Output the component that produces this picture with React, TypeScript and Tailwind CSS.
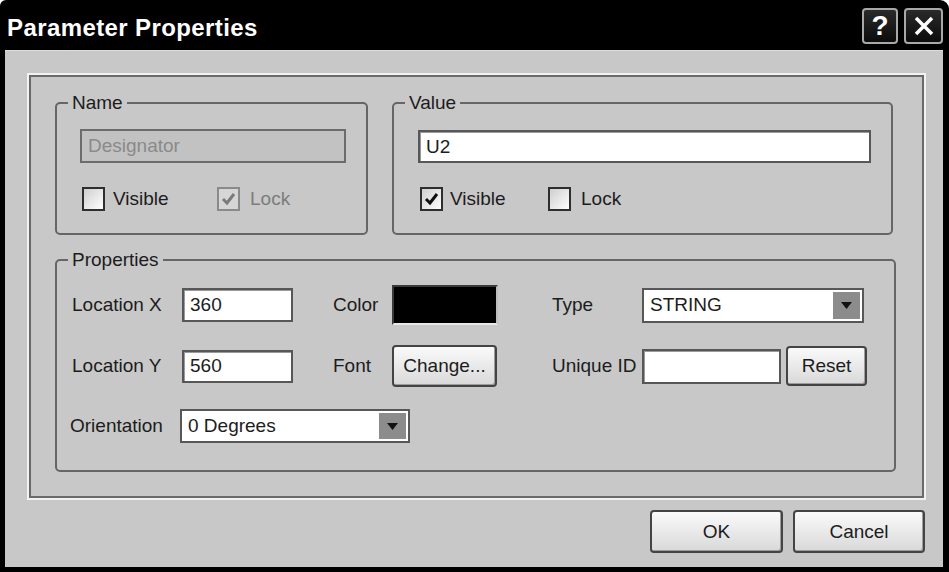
import type { ReactNode } from 'react';

const font = "font-['Liberation_Sans',Arial,sans-serif]";
const text = 'text-[19px] leading-[22px] text-[#1c1c1c]';
const field = 'bg-white border-2 border-[#575757] shadow-[inset_1px_1px_0_#9a9a9a] flex items-center pl-[6px] ' + text;
const btn = 'rounded-[4px] border-2 border-[#444] bg-gradient-to-b from-[#fafafa] to-[#d9d9d9] ' +
  'shadow-[inset_-1px_-1px_0_#9c9c9c] flex items-center justify-center ' + text;

function Group({ title, className, children }: { title: string; className: string; children: ReactNode }) {
  return (
    <fieldset className={'border-2 border-[#666] rounded-[5px] min-w-0 ' + className}>
      <legend className={'ml-[11px] px-[4px] ' + text}>{title}</legend>
      {children}
    </fieldset>
  );
}

function Check({ checked, disabled }: { checked?: boolean; disabled?: boolean }) {
  return (
    <span className={'w-[23px] h-[24px] border-2 flex items-center justify-center ' +
      (disabled
        ? 'border-[#8a8a8a] bg-[#d6d6d6]'
        : 'border-[#2e2e2e] bg-gradient-to-br from-[#cfcfcf] to-white')}>
      {checked && (
        <svg width="15" height="14" viewBox="0 0 15 14">
          <path d="M2 7 L6 11 L13 2" fill="none" stroke={disabled ? '#7a7a7a' : '#111'} strokeWidth="3" />
        </svg>
      )}
    </span>
  );
}

function Select({ value, className }: { value: string; className: string }) {
  return (
    <div className={'bg-white border-2 border-[#575757] flex items-stretch p-[2px] ' + className}>
      <span className={'flex-1 flex items-center pl-[4px] ' + text}>{value}</span>
      <span className="w-[27px] bg-[#8c8c8c] flex items-center justify-center">
        <svg width="11" height="7" viewBox="0 0 11 7"><path d="M0 0 H11 L5.5 7 Z" fill="#111" /></svg>
      </span>
    </div>
  );
}

export default function App() {
  return (
    <div className={'w-[949px] h-[572px] bg-white ' + font}>
      <div className="h-full bg-black rounded-tl-[6px] rounded-tr-[9px] flex flex-col">
        {/* Title bar */}
        <div className="h-[50px] flex items-center pl-[7px] pr-[6px]">
          <span className="text-white font-bold text-[24px] tracking-[0.4px] leading-none pt-[5px] flex-1">Parameter Properties</span>
          <div className="flex gap-[6px] mt-[2px]">
            <span className="w-[36px] h-[36px] rounded-[4px] border-2 border-[#a8a8a8] bg-gradient-to-b from-[#2a2a2a] to-[#0c0c0c] text-white font-bold text-[28px] leading-none flex items-center justify-center">?</span>
            <span className="w-[39px] h-[36px] rounded-[4px] border-2 border-[#a8a8a8] bg-gradient-to-b from-[#2a2a2a] to-[#0c0c0c] flex items-center justify-center">
              <svg width="22" height="22" viewBox="0 0 22 22"><path d="M3 3 L19 19 M19 3 L3 19" stroke="white" strokeWidth="3.5" /></svg>
            </span>
          </div>
        </div>

        {/* Body */}
        <div className="w-[938px] h-[517px] ml-[5px] bg-[#c8c8c8] border-t border-[#dcdcdc] flex flex-col">
          <div className="ml-[22px] mt-[22px] w-[899px] h-[427px] border-2 border-[#f2f2f2]">
            <div className="h-full border-2 border-[#6a6a6a] pl-[24px] pt-[15px]">
              <div className="flex gap-[24px]">
                <Group title="Name" className="w-[313px] h-[143px]">
                  <div className="ml-[23px] mt-[15px] w-[266px] h-[34px] bg-[#c2c2c2] border-2 border-[#6c6c6c] flex items-center pl-[6px] text-[19px] leading-[22px] text-[#8a8a8a]">
                    Designator
                  </div>
                  <div className="flex items-center ml-[25px] mt-[24px]">
                    <div className="w-[135px] flex items-center gap-[8px]">
                      <Check />
                      <span className={text}>Visible</span>
                    </div>
                    <div className="flex items-center gap-[10px]">
                      <Check checked disabled />
                      <span className="text-[19px] leading-[22px] text-[#7c7c7c]">Lock</span>
                    </div>
                  </div>
                </Group>
                <Group title="Value" className="w-[501px] h-[143px]">
                  <div className={'ml-[24px] mt-[16px] w-[453px] h-[33px] ' + field}>U2</div>
                  <div className="flex items-center ml-[26px] mt-[24px]">
                    <div className="w-[128px] flex items-center gap-[7px]">
                      <Check checked />
                      <span className={text}>Visible</span>
                    </div>
                    <div className="flex items-center gap-[10px]">
                      <Check />
                      <span className={text}>Lock</span>
                    </div>
                  </div>
                </Group>
              </div>

              <Group title="Properties" className="mt-[14px] w-[841px] h-[223px]">
                <div className="pl-[15px] pt-[14px] flex flex-col gap-[20px]">
                  <div className="h-[40px] flex items-center">
                    <span className={'w-[110px] ' + text}>Location X</span>
                    <div className={'w-[111px] h-[34px] ' + field}>360</div>
                    <span className={'ml-[40px] w-[59px] ' + text}>Color</span>
                    <div className="w-[106px] h-[40px] bg-black border-2 border-[#3a3a3a] border-b-[#e8e8e8] border-r-[#bdbdbd]" />
                    <span className={'ml-[54px] w-[90px] ' + text}>Type</span>
                    <Select value="STRING" className="w-[222px] h-[35px]" />
                  </div>
                  <div className="h-[42px] flex items-center">
                    <span className={'w-[110px] ' + text}>Location Y</span>
                    <div className={'w-[111px] h-[33px] ' + field}>560</div>
                    <span className={'ml-[40px] w-[59px] ' + text}>Font</span>
                    <button className={'w-[105px] h-[42px] ' + btn}>Change...</button>
                    <span className={'ml-[55px] w-[90px] ' + text}>Unique ID</span>
                    <div className={'w-[139px] h-[35px] ' + field} />
                    <button className={'ml-[5px] w-[81px] h-[40px] ' + btn}>Reset</button>
                  </div>
                  <div className="h-[36px] flex items-center mt-[1px]">
                    <span className={'w-[110px] -ml-[2px] ' + text}>Orientation</span>
                    <Select value="0 Degrees" className="w-[230px] h-[34px]" />
                  </div>
                </div>
              </Group>
            </div>
          </div>

          <div className="flex justify-end gap-[10px] mt-[10px] mr-[18px]">
            <button className={'w-[133px] h-[43px] ' + btn}>OK</button>
            <button className={'w-[132px] h-[43px] ' + btn}>Cancel</button>
          </div>
        </div>
      </div>
    </div>
  );
}
